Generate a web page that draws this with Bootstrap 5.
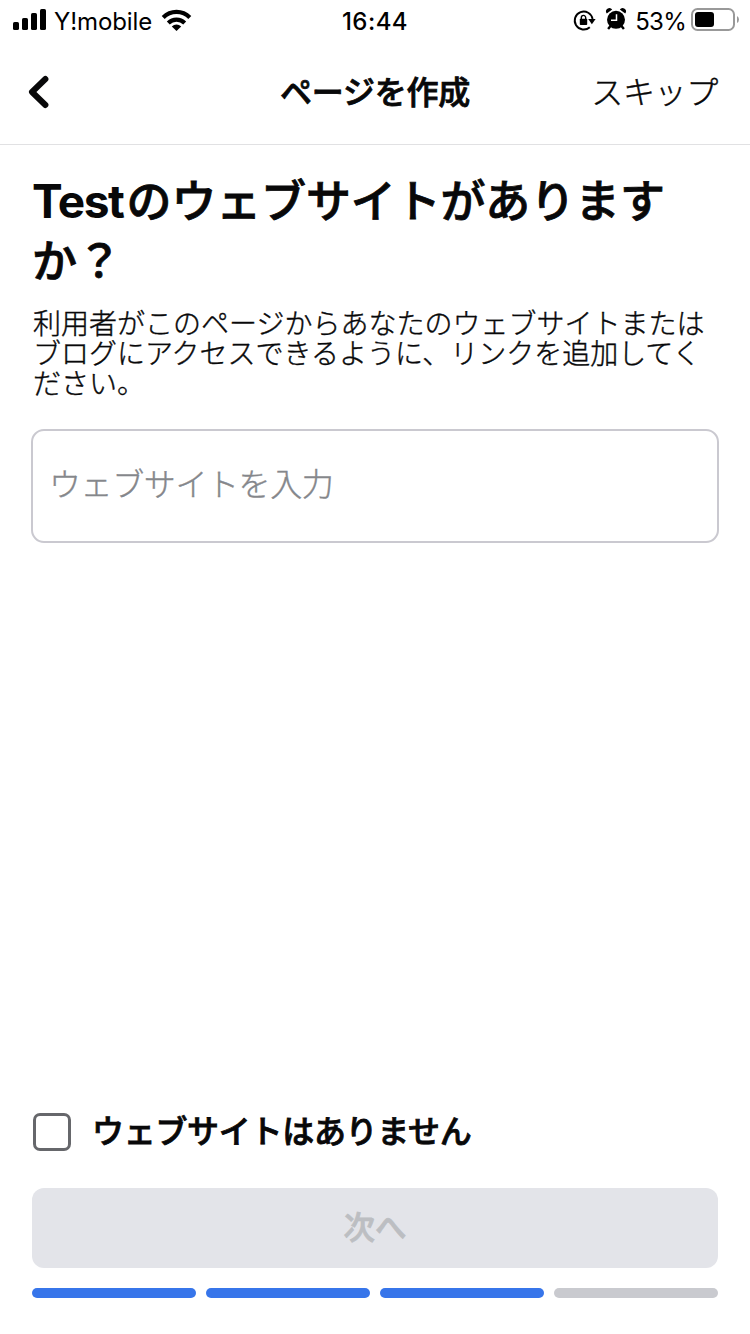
<!DOCTYPE html>
<html lang="ja">
<head>
<meta charset="utf-8">
<meta name="viewport" content="width=device-width, initial-scale=1">
<title>ページを作成</title>
<link href="https://cdn.jsdelivr.net/npm/bootstrap@5.3.0/dist/css/bootstrap.min.css" rel="stylesheet">
<style>
  body { font-family: Inter, "Noto Sans CJK JP", sans-serif; color: #080809; background: #fff; }
  .screen { height: 1334px; }
  .status-bar { height: 40px; font-size: 24px; line-height: 40px; color: #000; }
  .status-bar .side { flex: 1 1 0; }
  .status-bar span, .clock { padding-top: 3px; }
  .carrier { margin-left: 7px; margin-right: 9px; letter-spacing: -.1px; }
  .clock { font-weight: 500; letter-spacing: .45px; }
  .percent { letter-spacing: -.7px; margin: 0 4px 0 7px; }
  .battery { margin-right: 10px; }
  .page-nav { height: 105px; border-bottom: 1px solid #e1e1e3; }
  .page-nav .side { flex: 1 1 0; }
  .page-nav .page-title { font-size: 32px; letter-spacing: -.2px; line-height: 40px; padding-top: 2px; }
  .w3 { font-weight: 300; -webkit-text-stroke: .4px currentColor; }
  .w6 { font-weight: 500; -webkit-text-stroke: .8px currentColor; }
  .skip { color: #080809; font-size: 32px; letter-spacing: -.3px; line-height: 40px; margin-right: 8px; padding-top: 2px; }
  .headline { font-size: 45px; letter-spacing: -.15px; line-height: 60px; padding-top: 2px; margin-bottom: 17px; }
  .headline .latin { font-size: 46px; font-weight: 700; letter-spacing: -1.4px; margin-right: 3px; -webkit-text-stroke: 0; }
  .intro { font-size: 28px; line-height: 30px; padding-left: 1px; }
  .site-field { margin: 30px -1px 0; }
  .site-input, .site-input:focus { height: 114px; border: 2px solid #cac9d0; border-radius: 13px; font-size: 32px; letter-spacing: -.4px; box-shadow: none; padding-bottom: 10px; }
  .site-input::placeholder { color: #85878b; opacity: 1; }
  .none-check.form-check-input { width: 38px; height: 38px; border: 3px solid #66676b; border-radius: 7px; margin: 0 0 0 1px; }
  .none-label { font-size: 32px; letter-spacing: -.3px; line-height: 40px; margin-left: 21px; }
  .next-btn.btn { height: 80px; margin-top: 36px; border: 0; border-radius: 12px; background: #e3e4e9; color: #bcbec2; font-size: 31.5px; font-weight: 500; opacity: 1; }
  .steps { gap: 10px; margin-top: 20px; margin-bottom: 36px; }
  .step { height: 10px; background: #c9cacf; }
  .step.done { background: #3775ea; }
</style>
</head>
<body>
<div class="screen d-flex flex-column overflow-hidden">
  <div class="status-bar d-flex align-items-center">
    <div class="side d-flex align-items-center">
      <svg class="ms-2" width="39" height="40" viewBox="8 0 39 40"><rect x="13" y="22" width="6" height="8" rx="1.6"/><rect x="22" y="18" width="6" height="12" rx="1.6"/><rect x="31" y="13" width="6" height="17" rx="1.6"/><rect x="40" y="9" width="6" height="21" rx="1.6"/></svg>
      <span class="carrier">Y!mobile</span>
      <svg width="32" height="40" viewBox="161 0 32 40"><g fill="none" stroke="#000" stroke-width="4.2"><path d="M163.2 17.4a19 19 0 0 1 26.6 0"/><path d="M168.3 22.9a11.8 11.8 0 0 1 16.4 0"/></g><path d="M171.8 26.4a7 7 0 0 1 9.4 0L176.5 31z"/></svg>
    </div>
    <div class="clock">16:44</div>
    <div class="side d-flex align-items-center justify-content-end">
      <svg width="56" height="40" viewBox="573 0 56 40">
        <path d="M590.8 27.2A9 9 0 1 1 593.6 19" fill="none" stroke="#000" stroke-width="1.9"/>
        <path d="M589.2 19h7.4l-3.7 5.2z"/>
        <rect x="580.8" y="18.8" width="7.4" height="6.2" rx=".8"/><path d="M582.3 19v-1.2a2.2 2.4 0 0 1 4.4 0V19" fill="none" stroke="#000" stroke-width="1.4"/>
        <circle cx="617" cy="19.8" r="9"/><path d="M611.5 26l-2.4 3M622.5 26l2.4 3" stroke="#000" stroke-width="2.4"/>
        <path d="M607.8 13.6a3.2 3.2 0 0 1 5.4-4.2zM626.2 13.6a3.2 3.2 0 0 0-5.4-4.2z"/><path d="M617.5 14.2V20.3h-5.5" fill="none" stroke="#fff" stroke-width="1.5"/>
      </svg>
      <span class="percent">53%</span>
      <svg class="battery" width="50" height="40" viewBox="690 0 50 40"><rect x="692" y="9" width="42" height="21" rx="5.5" fill="none" stroke="#999" stroke-width="2"/><rect x="695" y="12" width="19" height="15" rx="3"/><path d="M737 16q2 1.2 2 3.5t-2 3.5z" fill="#999"/></svg>
    </div>
  </div>
  <header class="page-nav d-flex align-items-center px-4">
    <div class="side d-flex"><svg width="28" height="40" viewBox="24 72 28 40"><path d="M45.4 79L32 92l13.4 13" fill="none" stroke="#080809" stroke-width="6" stroke-linecap="round" stroke-linejoin="round"/></svg></div>
    <h1 class="page-title w6 mb-0">ページを作成</h1>
    <div class="side d-flex justify-content-end"><a class="skip w3 text-decoration-none" href="#">スキップ</a></div>
  </header>
  <main class="flex-grow-1 d-flex flex-column px-4 mx-2 pt-4">
    <h2 class="headline w6"><span class="latin">Test</span>のウェブサイトがあります<br>か？</h2>
    <p class="intro w3 mb-0">利用者がこのページからあなたのウェブサイトまたは<br>ブログにアクセスできるように、リンクを追加してく<br>ださい。</p>
    <div class="site-field">
      <input type="text" class="site-input w3 form-control px-3" placeholder="ウェブサイトを入力" aria-label="ウェブサイトを入力">
    </div>
    <div class="mt-auto">
      <div class="d-flex align-items-center">
        <input class="none-check form-check-input flex-shrink-0" type="checkbox" id="no-site">
        <label class="none-label w6" for="no-site">ウェブサイトはありません</label>
      </div>
      <button class="next-btn btn w6 w-100" disabled>次へ</button>
      <div class="steps d-flex">
        <div class="step done rounded-pill flex-fill"></div>
        <div class="step done rounded-pill flex-fill"></div>
        <div class="step done rounded-pill flex-fill"></div>
        <div class="step rounded-pill flex-fill"></div>
      </div>
    </div>
  </main>
</div>
<script src="https://cdn.jsdelivr.net/npm/bootstrap@5.3.0/dist/js/bootstrap.bundle.min.js"></script>
</body>
</html>
